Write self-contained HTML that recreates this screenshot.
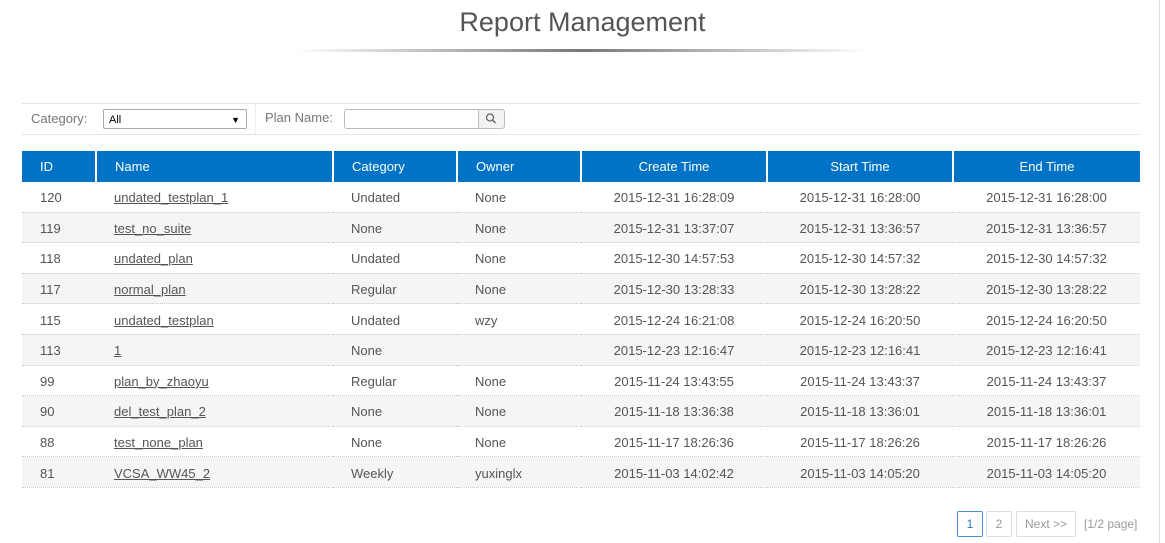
<!DOCTYPE html>
<html><head><meta charset="utf-8"><style>
body{margin:0;width:1165px;height:543px;background:#fff;font-family:"Liberation Sans",sans-serif;color:#555;position:relative;overflow:hidden}
h1{position:absolute;top:7px;left:0;width:1165px;text-align:center;margin:0;font-weight:normal;font-size:27px;color:#555}
.hr{position:absolute;left:295px;top:49px;width:575px;height:3px;background:linear-gradient(90deg,#fff,#777 50%,#fff)}
.filter{position:absolute;left:22px;top:103px;width:1118px;height:30px;border-top:1px solid #e5e5e5;border-bottom:1px solid #e5e5e5;font-size:13px;color:#777}
.sel{position:absolute;left:81px;top:5px;width:144px;height:20px;border:1px solid #aaa;border-radius:2px;font-size:11px;color:#000;line-height:20px;padding-left:5px;box-sizing:border-box}
.sel span{position:absolute;right:6px;top:0;font-size:9px}
.sep{position:absolute;left:233px;top:0;height:30px;border-left:1px dotted #ddd}
.inp{position:absolute;left:322px;top:5px;width:135px;height:20px;border:1px solid #bbb;border-radius:3px 0 0 3px;box-sizing:border-box}
.btn{position:absolute;left:456px;top:5px;width:27px;height:20px;border:1px solid #bbb;background:#f3f3f3;border-radius:0 3px 3px 0;box-sizing:border-box}
table{position:absolute;left:22px;top:151px;width:1118px;border-collapse:collapse;font-size:13px;table-layout:fixed}
th{background:#0073c6;color:#fff;font-weight:normal;height:31px;text-align:left;padding:0 0 0 18px;border-left:2px solid #fff}
th:first-child{border-left:none}
th.c{text-align:center;padding:0}
td{height:27.6px;padding:2px 0 0 18px;border-bottom:1px dotted #ccc}
td.c{text-align:center;padding:2px 0 0 0}
tr:nth-child(odd) td{background:#f5f5f5}
a{color:#555}
.pg{position:absolute;top:511px;height:26px;border:1px solid #ddd;border-radius:2px;box-sizing:border-box;font-size:12px;color:#999;line-height:24px;text-align:center}
</style></head><body>
<h1>Report Management</h1><div class="hr"></div>
<div class="filter">
<span style="position:absolute;left:9px;top:7px">Category:</span>
<div class="sel">All<span>▼</span></div>
<div class="sep"></div>
<span style="position:absolute;left:243px;top:6px">Plan Name:</span>
<div class="inp"></div>
<div class="btn"><svg width="25" height="18" viewBox="0 0 25 18"><circle cx="11" cy="7.5" r="3.5" fill="none" stroke="#666" stroke-width="1.3"/><path d="M13.5 10l3 3" stroke="#666" stroke-width="1.5"/></svg></div>
</div>
<table>
<colgroup><col style="width:74px"><col style="width:237px"><col style="width:124px"><col style="width:124px"><col style="width:186px"><col style="width:186px"><col style="width:187px"></colgroup>
<tr><th>ID</th><th>Name</th><th>Category</th><th>Owner</th><th class="c">Create Time</th><th class="c">Start Time</th><th class="c">End Time</th></tr>
<tr><td>120</td><td><a href="#">undated_testplan_1</a></td><td>Undated</td><td>None</td><td class="c">2015-12-31 16:28:09</td><td class="c">2015-12-31 16:28:00</td><td class="c">2015-12-31 16:28:00</td></tr>
<tr><td>119</td><td><a href="#">test_no_suite</a></td><td>None</td><td>None</td><td class="c">2015-12-31 13:37:07</td><td class="c">2015-12-31 13:36:57</td><td class="c">2015-12-31 13:36:57</td></tr>
<tr><td>118</td><td><a href="#">undated_plan</a></td><td>Undated</td><td>None</td><td class="c">2015-12-30 14:57:53</td><td class="c">2015-12-30 14:57:32</td><td class="c">2015-12-30 14:57:32</td></tr>
<tr><td>117</td><td><a href="#">normal_plan</a></td><td>Regular</td><td>None</td><td class="c">2015-12-30 13:28:33</td><td class="c">2015-12-30 13:28:22</td><td class="c">2015-12-30 13:28:22</td></tr>
<tr><td>115</td><td><a href="#">undated_testplan</a></td><td>Undated</td><td>wzy</td><td class="c">2015-12-24 16:21:08</td><td class="c">2015-12-24 16:20:50</td><td class="c">2015-12-24 16:20:50</td></tr>
<tr><td>113</td><td><a href="#">1</a></td><td>None</td><td></td><td class="c">2015-12-23 12:16:47</td><td class="c">2015-12-23 12:16:41</td><td class="c">2015-12-23 12:16:41</td></tr>
<tr><td>99</td><td><a href="#">plan_by_zhaoyu</a></td><td>Regular</td><td>None</td><td class="c">2015-11-24 13:43:55</td><td class="c">2015-11-24 13:43:37</td><td class="c">2015-11-24 13:43:37</td></tr>
<tr><td>90</td><td><a href="#">del_test_plan_2</a></td><td>None</td><td>None</td><td class="c">2015-11-18 13:36:38</td><td class="c">2015-11-18 13:36:01</td><td class="c">2015-11-18 13:36:01</td></tr>
<tr><td>88</td><td><a href="#">test_none_plan</a></td><td>None</td><td>None</td><td class="c">2015-11-17 18:26:36</td><td class="c">2015-11-17 18:26:26</td><td class="c">2015-11-17 18:26:26</td></tr>
<tr><td>81</td><td><a href="#">VCSA_WW45_2</a></td><td>Weekly</td><td>yuxinglx</td><td class="c">2015-11-03 14:02:42</td><td class="c">2015-11-03 14:05:20</td><td class="c">2015-11-03 14:05:20</td></tr>
</table>
<div class="pg" style="left:957px;width:26px;border-color:#4a90d9;color:#2a7ac0">1</div>
<div class="pg" style="left:986px;width:26px">2</div>
<div class="pg" style="left:1016px;width:60px">Next &gt;&gt;</div>
<div style="position:absolute;left:1084px;top:517px;font-size:12px;color:#999">[1/2 page]</div>
<div style="position:absolute;left:1159px;top:0;width:1px;height:543px;background:#ddd"></div>
</body></html>
